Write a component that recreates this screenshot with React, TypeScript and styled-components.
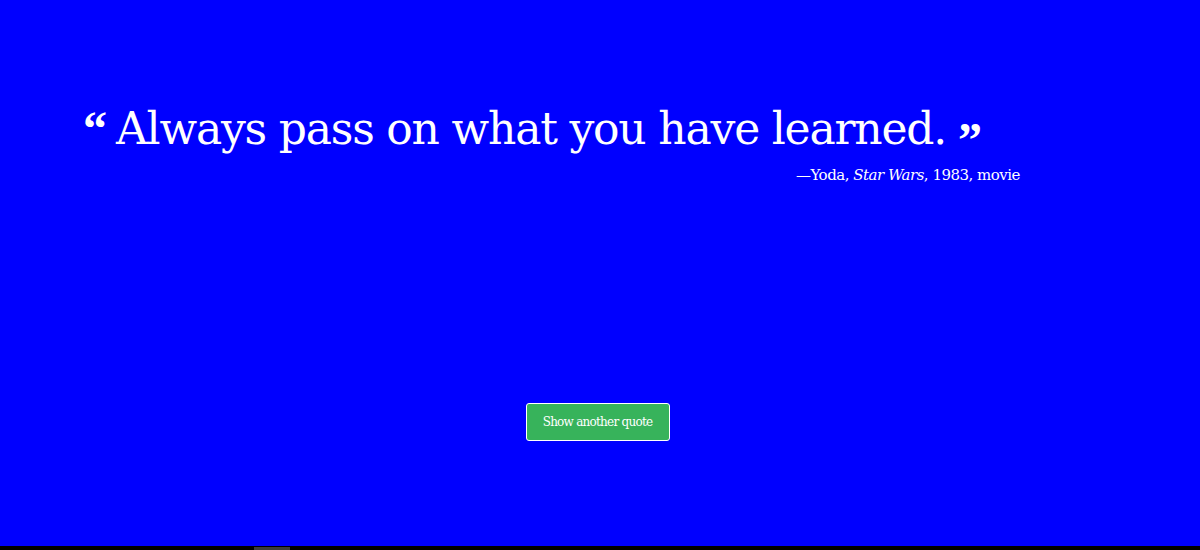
import React from "react";
import styled, { createGlobalStyle } from "styled-components";

const Global = createGlobalStyle`
  html, body { margin: 0; padding: 0; background: #0000ff; overflow: hidden; }
  * { box-sizing: border-box; }
`;

const Page = styled.main`
  width: 1200px;
  height: 550px;
  background: #0000ff;
  color: #ffffff;
  font-family: "DejaVu Serif", "Liberation Serif", serif;
  display: flex;
  flex-direction: column;
  padding: 99px 0 0 83px;
`;

const QuoteBlock = styled.figure`
  margin: 0;
  width: 937px;
  display: flex;
  flex-direction: column;
`;

const QuoteLine = styled.blockquote`
  margin: 0;
  height: 60px;
  display: flex;
  align-items: flex-start;
  font-size: 44px;
  line-height: 60px;
  letter-spacing: -1.2px;
  white-space: nowrap;
`;

const Mark = styled.span<{ $close?: boolean }>`
  font-family: "Liberation Serif", serif;
  font-weight: bold;
  font-size: 48px;
  line-height: 40px;
  letter-spacing: 0;
  margin-top: ${(p) => (p.$close ? "21px" : "10px")};
  margin-left: ${(p) => (p.$close ? "12px" : "0")};
  margin-right: ${(p) => (p.$close ? "0" : "9px")};
`;

const Cite = styled.figcaption`
  text-align: right;
  font-size: 15px;
  line-height: 20px;
  letter-spacing: -0.5px;
  margin-top: 6px;
  em { font-style: italic; }
`;

const ButtonRow = styled.div`
  display: flex;
  justify-content: center;
  width: 1195px;
  margin-left: -83px;
  margin-top: 218px;
`;

const Button = styled.button`
  width: 144px;
  height: 38px;
  background: #37b35b;
  border: 1px solid #ffffff;
  border-radius: 3px;
  color: #ffffff;
  font-family: "DejaVu Serif", "Liberation Serif", serif;
  font-size: 12px;
  letter-spacing: -0.75px;
  padding: 0;
  cursor: pointer;
`;

const Scrollbar = styled.div`
  position: fixed;
  left: 0;
  right: 0;
  bottom: 0;
  height: 4px;
  background: #000000;
`;

const Thumb = styled.div`
  position: absolute;
  left: 254px;
  top: 1px;
  width: 36px;
  height: 3px;
  background: #3c3c3c;
`;

export default function App() {
  return (
    <>
      <Global />
      <Page>
        <QuoteBlock>
          <QuoteLine>
            <Mark>“</Mark>
            <span>Always pass on what you have learned.</span>
            <Mark $close>”</Mark>
          </QuoteLine>
          <Cite>
            —Yoda, <em>Star Wars</em>, 1983, movie
          </Cite>
        </QuoteBlock>
        <ButtonRow>
          <Button>Show another quote</Button>
        </ButtonRow>
      </Page>
      <Scrollbar>
        <Thumb />
      </Scrollbar>
    </>
  );
}
